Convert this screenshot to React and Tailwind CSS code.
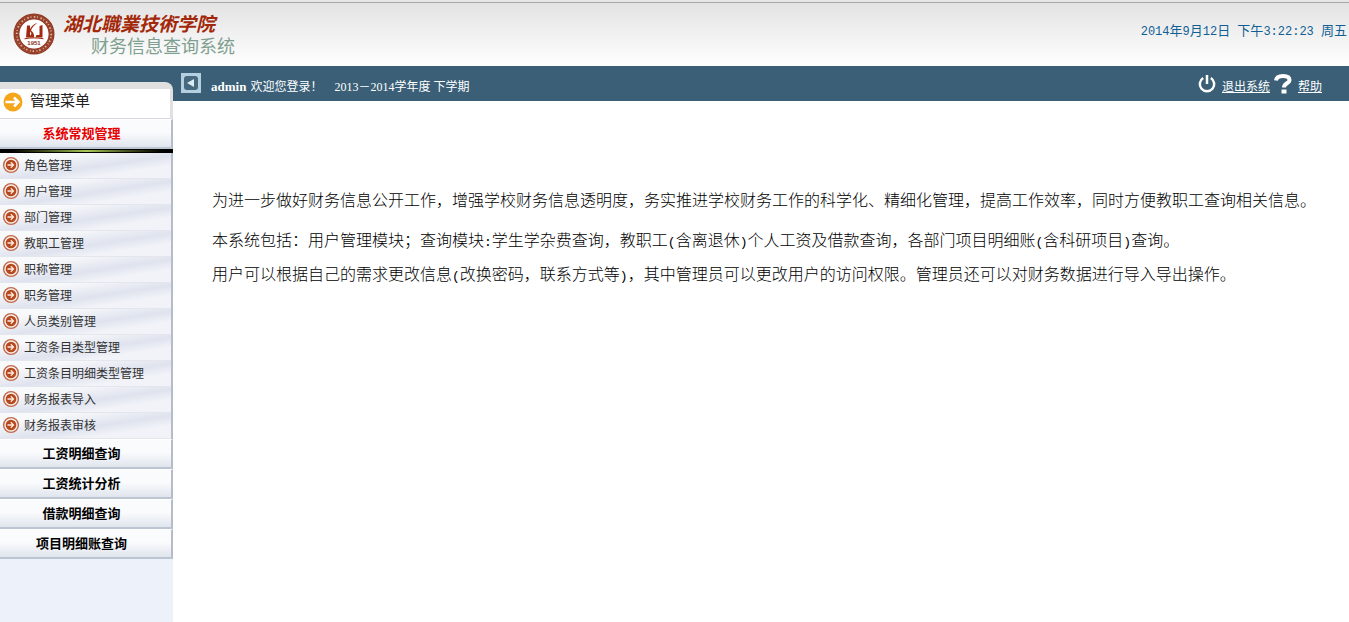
import React, { useState } from 'react';
import clsx from 'clsx';

const menuItems = [
  '角色管理',
  '用户管理',
  '部门管理',
  '教职工管理',
  '职称管理',
  '职务管理',
  '人员类别管理',
  '工资条目类型管理',
  '工资条目明细类型管理',
  '财务报表导入',
  '财务报表审核'
];

const otherSections = ['工资明细查询', '工资统计分析', '借款明细查询', '项目明细账查询'];

const Seal = () => (
  <svg className="h-[42px] w-[42px] shrink-0" viewBox="0 0 42 42" fill="none">
    <circle cx="21" cy="21" r="19.800" stroke="#8f3a22" strokeWidth="1.400" />
    <circle cx="21" cy="21" r="17" stroke="#98402a" strokeWidth="5" />
    <circle cx="21" cy="21" r="17.200" stroke="#dcb5a5" strokeWidth="1.800" strokeDasharray="1.500 1.800 0.800 2.600" />
    <circle cx="21" cy="21" r="14.300" fill="#fff" />
    <path d="M14 12.500h3v12h-4zM24.500 9.500c-3 2.500-5.500 5-6.500 8 2 1.500 3.500 3.500 3 7h-5l2.500-4-2-3c1-3.500 4-6.500 8-8z" fill="#a02a10" />
    <path d="M26.500 13l3-1v12.500h-7l1-2.500h3z" fill="#a02a10" />
    <path d="M11.500 25.800c6-1.200 13-1.200 19 0" stroke="#a02a10" strokeWidth="1" />
    <text x="21" y="32" textAnchor="middle" fontSize="6" fontWeight="700" fontFamily="Liberation Sans, sans-serif" fill="#8a3018">1951</text>
  </svg>
);

const ItemIcon = () => (
  <svg className="h-[18px] w-[18px] shrink-0" viewBox="0 0 18 18" fill="none">
    <circle cx="9" cy="9" r="7.400" fill="#fbeee8" stroke="#c0694a" strokeWidth="1.400" />
    <circle cx="9" cy="9" r="5.300" fill="#b5481f" />
    <path d="M5.500 9h6M8.800 6.300l2.700 2.700-2.700 2.700" stroke="#fbe9df" strokeWidth="1.300" />
  </svg>
);

const MenuIcon = () => (
  <svg className="h-5 w-5 shrink-0" viewBox="0 0 20 20" fill="none">
    <circle cx="10" cy="10" r="9.500" fill="#f5a61b" />
    <path d="M2.500 10h13M11 5.500l4.500 4.500-4.500 4.500" stroke="#fff" strokeWidth="2.500" />
  </svg>
);

const CollapseIcon = () => (
  <svg className="h-5 w-5" viewBox="0 0 20 20" fill="none">
    <rect width="20" height="20" fill="#b4d0e0" />
    <rect x="3" y="3" width="14" height="14" rx="3" fill="#47697e" />
    <path d="M13 6v8l-7-4z" fill="#dcecf5" />
  </svg>
);

const PowerIcon = () => (
  <svg className="h-[18px] w-[18px]" viewBox="0 0 18 18" fill="none" stroke="#fff" strokeWidth="2.500">
    <path d="M5.200 3a7.200 7.200 0 1 0 7.600 0" />
    <path d="M9 0v9" />
  </svg>
);

const HelpIcon = () => (
  <svg className="h-5 w-[18px]" viewBox="0 0 18 20" fill="none">
    <path d="M2 6.500C2.500 3 5.500 2 9 2c4 0 6.500 1.300 6.500 4 0 3.600-5.500 3-5.500 7.500" stroke="#fff" strokeWidth="4" />
    <rect x="7.500" y="15.500" width="5" height="4" fill="#fff" />
  </svg>
);

// Latin characters at half the width of the Chinese ones
const Half = ({ children }) => (
  <span className="font-['Liberation_Mono',monospace] text-[13px] leading-none">{children}</span>
);

const Num = ({ children }) => (
  <span className="font-['Liberation_Mono',monospace] text-xs leading-none">{children}</span>
);

const SectionButton = ({ title, active, onClick }) => (
  <button
    type="button"
    onClick={onClick}
    className={clsx(
      'block h-[30px] w-full border-t border-r-2 border-b-2 border-t-white border-r-[#b3bcc8] border-b-[#bcc6d2] bg-linear-to-b from-[#fafbfd] from-45% to-[#e0e5ed] pr-2 text-center text-[13px] leading-6 font-bold',
      active ? 'text-[#e60000]' : 'text-black'
    )}
  >
    {title}
  </button>
);

const Sidebar = () => {
  const [active, setActive] = useState('系统常规管理');

  return (
    <aside className="w-[173px] shrink-0 bg-[#edf1fa]">
      <div className="bg-[#3a5f77] pt-4">
        <div className="rounded-tr-lg bg-[#dfe0df] pt-[7px] pr-[3px]">
          <h2 className="flex h-[30px] items-center gap-[7px] border-b border-[#d5d8de] bg-white pr-1 pb-1 pl-[3px] text-[15px] text-[#222]">
            <MenuIcon />
            管理菜单
          </h2>
        </div>
      </div>
      <SectionButton
        title="系统常规管理"
        active={active === '系统常规管理'}
        onClick={() => setActive('系统常规管理')}
      />
      <div className="h-1 border-y border-black bg-linear-to-r from-black via-[#a9c95a] to-black"></div>
      <ul className="border-r-2 border-[#b3bcc8]">
        {menuItems.map((item) => (
          <li
            key={item}
            className="h-[26px] border-b border-[#e3e6ec] bg-linear-to-br from-[#f8f9fb] from-20% via-[#dfe3ee] via-55% to-[#f1f3f8] to-75%"
          >
            <a href="#" className="flex h-full items-start gap-1 pt-[3px] pl-0.5 text-xs leading-5 text-[#333]">
              <ItemIcon />
              {item}
            </a>
          </li>
        ))}
      </ul>
      {otherSections.map((title) => (
        <SectionButton
          key={title}
          title={title}
          active={active === title}
          onClick={() => setActive(title)}
        />
      ))}
    </aside>
  );
};

const App = () => {
  return (
    <div className="flex min-h-screen flex-col bg-white font-['Liberation_Serif','Noto_Sans_CJK_SC',sans-serif]">
      <header className="border-t-2 border-[#e6e6e6]">
        <div className="flex h-16 items-start justify-between border-t border-[#a9a9a9] bg-linear-to-b from-[#e3e3e3] to-white pr-0.5 pl-[13px]">
          <div className="flex gap-2 pt-[10px]">
            <Seal />
            <div>
              <h1 className="text-[19px] leading-6 font-bold text-[#a3280a] italic">湖北職業技術学院</h1>
              <p className="pl-7 text-lg leading-5 text-[#7f9f90]">财务信息查询系统</p>
            </div>
          </div>
          <time className="pt-4 text-[13px] leading-6 whitespace-pre text-[#0f5f94]">
            <Num>2014</Num>年<Num>9</Num>月<Num>12</Num>日<Num> </Num>下午<Num>3:22:23 </Num>周五
          </time>
        </div>
      </header>

      <div className="flex grow">
        <Sidebar />
        <div className="min-w-0 grow">
          <div className="flex h-[35px] items-center justify-between bg-[#3a5f77] pr-[27px] pl-2 text-xs text-white">
            <div className="flex items-center">
              <button type="button" aria-label="收起菜单">
                <CollapseIcon />
              </button>
              <p className="pt-1.5 pl-[10px]">
                <b className="text-[13px]">admin</b>
                <span className="pl-1">欢迎您登录！</span>
                <span className="pl-3">2013－2014学年度 下学期</span>
              </p>
            </div>
            <nav className="flex items-center gap-1">
              <PowerIcon />
              <a href="#" className="pt-1.5 pl-0.5 underline">退出系统</a>
              <HelpIcon />
              <a href="#" className="pt-1.5 pl-0.5 underline">帮助</a>
            </nav>
          </div>
          <main className="pt-[83px] pr-4 pl-[39px] text-base leading-[34px] font-light text-black">
            <p className="mb-1.5">
              为进一步做好财务信息公开工作，增强学校财务信息透明度，务实推进学校财务工作的科学化、精细化管理，提高工作效率，同时方便教职工查询相关信息。
            </p>
            <p>
              本系统包括：用户管理模块；查询模块<Half>:</Half>学生学杂费查询，教职工<Half>(</Half>含离退休<Half>)</Half>个人工资及借款查询，各部门项目明细账<Half>(</Half>含科研项目<Half>)</Half>查询。
            </p>
            <p>
              用户可以根据自己的需求更改信息<Half>(</Half>改换密码，联系方式等<Half>)</Half>，其中管理员可以更改用户的访问权限。管理员还可以对财务数据进行导入导出操作。
            </p>
          </main>
        </div>
      </div>
    </div>
  );
};

export default App;
